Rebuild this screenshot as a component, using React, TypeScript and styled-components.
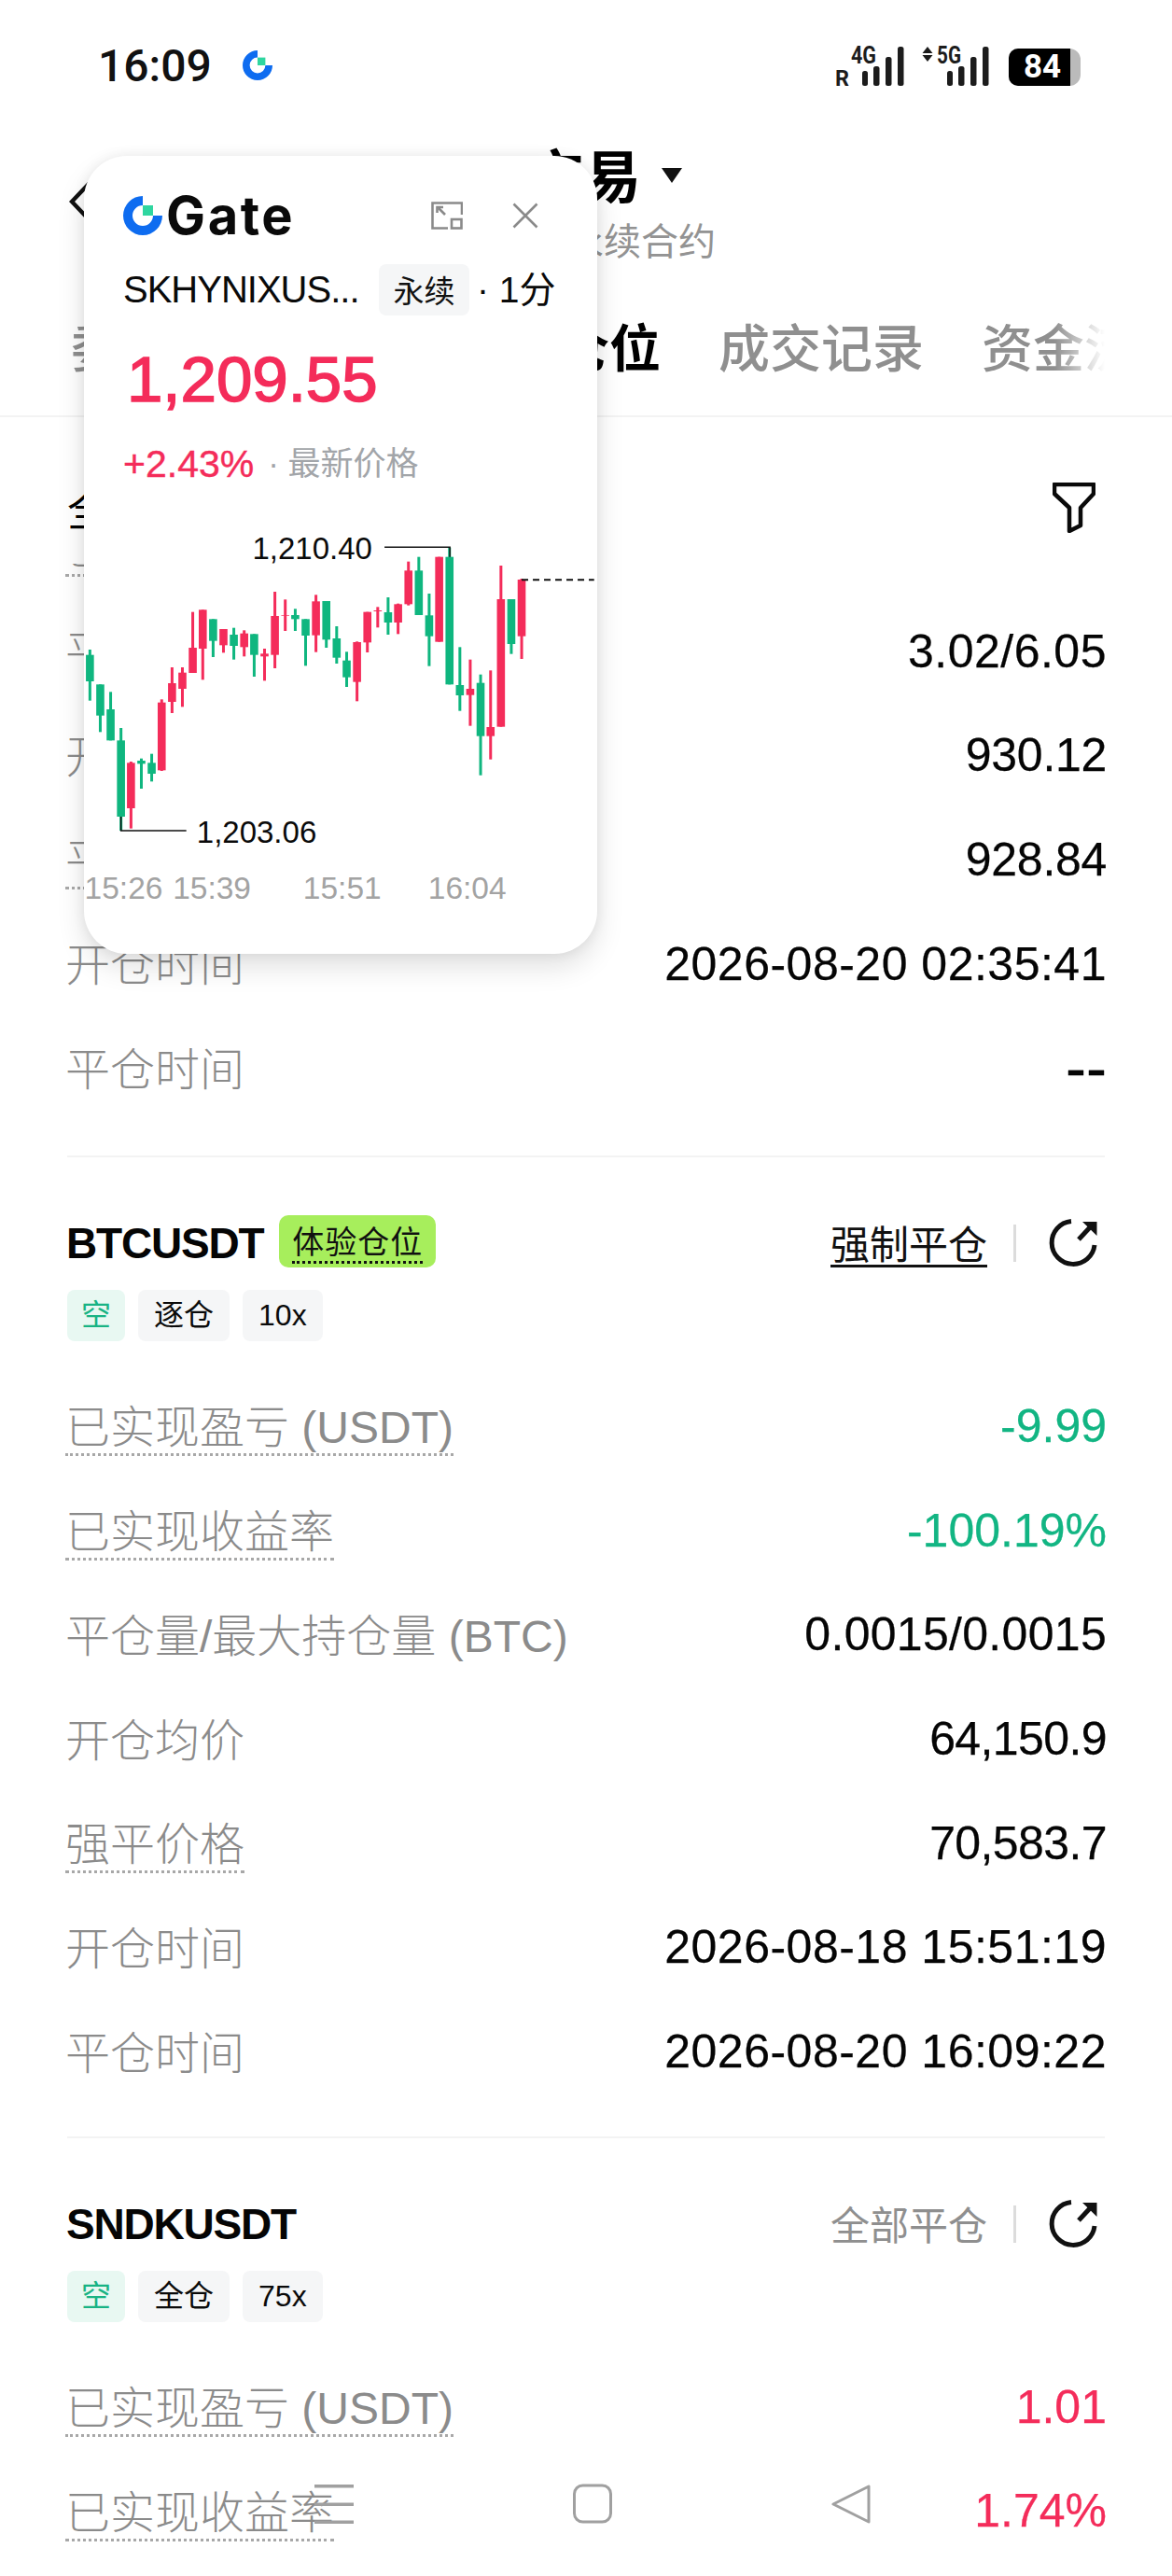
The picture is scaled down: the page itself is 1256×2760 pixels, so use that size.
import React from "react";
import styled, { createGlobalStyle } from "styled-components";

const GlobalStyle = createGlobalStyle`
  html, body { margin: 0; padding: 0; background: #fff; }
  body { font-family: "Liberation Sans", "Noto Sans CJK SC", sans-serif; }
`;

const RED = "#f42c5a";
const GREEN = "#0fb67f";

const Page = styled.div`
  position: relative;
  width: 1256px;
  height: 2760px;
  overflow: hidden;
  background: #fff;
  display: flex;
  flex-direction: column;
  color: #0a0a0a;
`;

const StatusBar = styled.div`
  height: 140px;
  flex: none;
  display: flex;
  align-items: center;
  padding: 0 98px 0 105px;
`;
const Time = styled.span`
  font: 500 48px/1 Roboto, sans-serif;
  color: #111;
  margin-top: 2px;
`;
const StatusMark = styled.svg`
  width: 32px;
  height: 32px;
  margin-left: 33px;
`;
const Signals = styled.svg`
  width: 166px;
  height: 50px;
  margin-left: auto;
  margin-top: 2px;
`;
const Battery = styled.div`
  margin-left: 20px;
  width: 77px;
  height: 40px;
  border-radius: 10px 12px 12px 10px;
  margin-top: 4px;
  background: #bbb;
  overflow: hidden;
  display: flex;
`;
const BatteryFill = styled.div`
  width: 66px;
  height: 100%;
  background: #000;
  color: #fff;
  font: 700 35px/40px Roboto, sans-serif;
  text-align: center;
  padding-left: 6px;
  box-sizing: border-box;
`;

const Header = styled.div`
  height: 158px;
  flex: none;
  box-sizing: border-box;
  padding: 16px 489px 0 74px;
  display: flex;
  justify-content: space-between;
`;
const BackIcon = styled.svg`
  width: 26px;
  height: 48px;
  margin-top: 36px;
`;
const HeaderCenter = styled.div`
  display: flex;
  flex-direction: column;
  align-items: flex-end;
`;
const TitleRow = styled.div`
  display: flex;
  align-items: center;
  margin-right: 36px;
  font: 700 61px/60px "Noto Sans CJK SC", sans-serif;
  color: #000;
`;
const Caret = styled.svg`
  width: 22px;
  height: 16px;
  margin-left: 22px;
  margin-top: 4px;
`;
const Subtitle = styled.div`
  margin-top: 22px;
  font: 400 40px/42px "Liberation Sans", "Noto Sans CJK SC", sans-serif;
  color: #939393;
`;

const TabsBar = styled.div`
  height: 149px;
  flex: none;
  box-sizing: border-box;
  border-bottom: 2px solid #f3f3f3;
`;
const TabsTrack = styled.div`
  width: 1184px;
  height: 147px;
  box-sizing: border-box;
  padding: 0 0 6px 76px;
  display: flex;
  align-items: center;
  gap: 62px;
  overflow: hidden;
  white-space: nowrap;
  -webkit-mask-image: linear-gradient(to right, #000 1130px, transparent 1184px);
  mask-image: linear-gradient(to right, #000 1130px, transparent 1184px);
`;
const Tab = styled.span<{ $active?: boolean; $minWidth?: number }>`
  flex: none;
  min-width: ${(p) => p.$minWidth ?? 0}px;
  font: ${(p) => (p.$active ? 700 : 500)} 55px/64px "Noto Sans CJK SC", sans-serif;
  color: ${(p) => (p.$active ? "#000" : "#8f8f8f")};
`;

const FilterRow = styled.div`
  height: 157px;
  flex: none;
  box-sizing: border-box;
  padding: 68px 82px 0 72px;
  display: flex;
  justify-content: space-between;
  align-items: flex-start;
`;
const FilterLabel = styled.span`
  font: 400 46px/56px "Noto Sans CJK SC", sans-serif;
  color: #000;
`;
const FilterIcon = styled.svg`
  width: 46px;
  height: 54px;
  margin-top: 2px;
`;

const ScrollArea = styled.div`
  flex: 1;
  min-height: 0;
  overflow: hidden;
`;
const ScrollInner = styled.div`
  margin-top: -74px;
  padding: 0 72px;
`;
const Section = styled.section<{ $first?: boolean }>`
  padding-top: ${(p) => (p.$first ? 0 : 59)}px;
  padding-bottom: ${(p) => (p.$first ? 38 : 35)}px;
  border-bottom: 2px solid #f3f3f3;
  &:last-child { border-bottom: 0; }
`;
const TitleLine = styled.div`
  height: 66px;
  display: flex;
  align-items: center;
`;
const Symbol = styled.span`
  font: 700 46px/66px "Liberation Sans", sans-serif;
  letter-spacing: -1.2px;
  margin-left: -1px;
  color: #050505;
`;
const TrialBadge = styled.span`
  margin-left: 17px;
  width: 168px;
  height: 56px;
  margin-top: -4px;
  box-sizing: border-box;
  padding-top: 5px;
  border-radius: 10px;
  background: #a7ee5c;
  display: flex;
  justify-content: center;
`;
const TrialText = styled.span`
  font: 400 34px/43px "Noto Sans CJK SC", sans-serif;
  letter-spacing: 1px;
  height: 44px;
  color: #111;
  border-bottom: 3px dotted #111;
`;
const Actions = styled.div`
  margin-left: auto;
  display: flex;
  align-items: center;
`;
const ActionLink = styled.span<{ $underlined?: boolean }>`
  font: 400 42px/50px "Noto Sans CJK SC", sans-serif;
  height: 52px;
  box-sizing: border-box;
  color: ${(p) => (p.$underlined ? "#111" : "#8f8f8f")};
  border-bottom: 3px solid ${(p) => (p.$underlined ? "#111" : "transparent")};
`;
const ActionDivider = styled.span`
  width: 3px;
  height: 40px;
  margin: 0 34px 0 28px;
  background: #dcdcdc;
`;
const ShareIcon = styled.svg`
  width: 56px;
  height: 56px;
  margin-right: 5px;
`;
const TagRow = styled.div`
  margin-top: 17px;
  display: flex;
  gap: 14px;
`;
const Tag = styled.span<{ $tone?: "short" }>`
  height: 55px;
  box-sizing: border-box;
  padding: 0 ${(p) => (p.$tone ? 15 : 17)}px;
  border-radius: 8px;
  font: 400 32px/55px "Liberation Sans", "Noto Sans CJK SC", sans-serif;
  background: ${(p) => (p.$tone ? "#e8f8f2" : "#f5f6f7")};
  color: ${(p) => (p.$tone ? "#19b384" : "#0a0a0a")};
`;
const Rows = styled.div<{ $first?: boolean }>`
  margin-top: ${(p) => (p.$first ? 0 : 35)}px;
`;
const Row = styled.div`
  height: 111.7px;
  display: flex;
  align-items: center;
  justify-content: space-between;
`;
const Label = styled.span<{ $dotted?: boolean }>`
  margin: 7px 0 0 -2px;
  font: 300 48px/56px "Liberation Sans", "Noto Sans CJK SC", sans-serif;
  color: #8b8b8b;
  box-sizing: border-box;
  height: 58px;
  border-bottom: 3px dotted ${(p) => (p.$dotted ? "#a8a8a8" : "transparent")};
`;
const Value = styled.span<{ $tone?: "up" | "down"; $tracking?: number; $dash?: boolean }>`
  margin-right: -2px;
  font: 400 ${(p) => (p.$dash ? 66 : 50)}px/56px "Liberation Sans", sans-serif;
  letter-spacing: ${(p) => p.$tracking ?? 0}px;
  -webkit-text-stroke: 0.25px currentColor;
  color: ${(p) => (p.$tone === "up" ? RED : p.$tone === "down" ? "#12b583" : "#050505")};
`;

/* floating mini chart window */
const FloatCard = styled.div`
  position: absolute;
  left: 90px;
  top: 167px;
  width: 550px;
  height: 855px;
  box-sizing: border-box;
  padding: 43px 0 0 42px;
  border-radius: 46px;
  background: #fff;
  overflow: hidden;
  box-shadow: 0 14px 30px rgba(0, 0, 0, 0.12), 0 0 14px rgba(0, 0, 0, 0.07);
`;
const CardTop = styled.div`
  height: 42px;
  display: flex;
  align-items: center;
  padding-right: 63px;
`;
const LogoMark = styled.svg`
  width: 42px;
  height: 42px;
`;
const LogoWord = styled.span`
  margin-left: 4px;
  font: 700 56px/42px Inter, sans-serif;
  letter-spacing: 2.6px;
  color: #0a0a0a;
`;
const ExpandIcon = styled.svg`
  width: 34px;
  height: 30px;
  margin-left: auto;
`;
const CloseIcon = styled.svg`
  width: 28px;
  height: 28px;
  margin-left: 53px;
`;
const InfoRow = styled.div`
  margin-top: 31px;
  height: 55px;
  display: flex;
  align-items: center;
`;
const InfoName = styled.span`
  width: 254px;
  font: 400 40px/55px "Liberation Sans", sans-serif;
  letter-spacing: -1px;
  color: #0a0a0a;
  white-space: nowrap;
`;
const InfoTag = styled.span`
  margin-left: 20px;
  width: 97px;
  height: 55px;
  border-radius: 8px;
  background: #f5f6f7;
  text-align: center;
  font: 400 33px/55px "Noto Sans CJK SC", sans-serif;
  color: #111;
`;
const InfoPeriod = styled.span`
  margin-left: 8px;
  font: 400 39px/55px "Liberation Sans", "Noto Sans CJK SC", sans-serif;
  color: #0a0a0a;
  white-space: nowrap;
`;
const Price = styled.div`
  margin: 32px 0 0 4px;
  font: 400 69px/74px "Liberation Sans", sans-serif;
  -webkit-text-stroke: 1.6px ${RED};
  color: ${RED};
`;
const ChangeRow = styled.div`
  margin-top: 31px;
  height: 44px;
  display: flex;
  align-items: center;
`;
const ChangeValue = styled.span`
  font: 400 41px/44px "Liberation Sans", sans-serif;
  -webkit-text-stroke: 0.4px ${RED};
  color: ${RED};
`;
const ChangeNote = styled.span`
  margin-left: 15px;
  font: 400 35px/44px "Liberation Sans", "Noto Sans CJK SC", sans-serif;
  color: #a2a5a9;
`;
const ChartSvg = styled.svg`
  display: block;
  width: 550px;
  height: 470px;
  margin: 21px 0 0 -42px;
`;

/* system navigation drawn over the content */
const NavKeys = styled.div`
  position: absolute;
  left: 337px;
  top: 2661px;
  display: flex;
  gap: 235px;
`;
const NavIcon = styled.svg`
  width: 42px;
  height: 44px;
`;

type CandleData = [number, number, number, number, number, "r" | "g"];
const candles: CandleData[] = [
  [95, 468, 632, 485, 570, "g"], [124, 580, 733, 580, 680, "g"], [153, 604, 760, 660, 760, "g"],
  [182, 720, 1050, 760, 1005, "g"], [210, 828, 1043, 832, 978, "r"], [239, 818, 915, 825, 835, "g"],
  [268, 803, 892, 832, 867, "g"], [296, 628, 858, 638, 856, "r"], [325, 525, 672, 576, 636, "r"],
  [354, 525, 652, 542, 594, "r"], [383, 347, 543, 462, 543, "r"], [411, 340, 565, 340, 465, "r"],
  [440, 370, 492, 370, 440, "g"], [469, 402, 478, 402, 454, "r"], [498, 398, 500, 420, 456, "g"],
  [527, 406, 490, 416, 460, "r"], [555, 418, 555, 418, 485, "g"], [584, 465, 568, 481, 490, "r"],
  [613, 282, 528, 360, 485, "r"], [642, 307, 408, 357, 359, "r"], [670, 337, 408, 357, 370, "g"],
  [699, 370, 520, 370, 423, "g"], [728, 292, 476, 313, 422, "r"], [757, 312, 462, 312, 436, "g"],
  [786, 393, 513, 432, 494, "g"], [814, 475, 588, 503, 557, "g"], [843, 442, 634, 444, 572, "r"],
  [872, 347, 477, 347, 445, "r"], [901, 331, 397, 342, 345, "r"], [930, 300, 420, 348, 381, "g"],
  [958, 320, 418, 322, 381, "r"], [987, 185, 326, 214, 322, "r"], [1016, 170, 357, 214, 357, "g"],
  [1045, 288, 521, 358, 425, "g"], [1073, 170, 443, 170, 443, "r"], [1102, 140, 580, 170, 580, "g"],
  [1131, 460, 665, 582, 615, "g"], [1160, 500, 713, 594, 614, "r"], [1189, 548, 872, 575, 746, "g"],
  [1217, 535, 821, 717, 746, "r"], [1246, 198, 716, 306, 716, "r"], [1275, 306, 482, 306, 450, "g"],
  [1304, 240, 498, 243, 425, "r"],
];
const cx = (x: number) => x / 2.613 - 30;
const cy = (y: number) => y / 3;

const Chart = () => (
  <ChartSvg viewBox="0 0 550 470">
    {candles.map(([x, wt, wb, bt, bb, c], i) => {
      const color = c === "r" ? RED : GREEN;
      return (
        <g key={i} fill={color}>
          <rect x={cx(x) - 1.5} y={cy(wt)} width={3} height={cy(wb) - cy(wt)} />
          <rect x={cx(x) - 4.3} y={cy(bt)} width={8.6} height={cy(bb) - cy(bt)} />
        </g>
      );
    })}
    <path d={`M${cx(920)} ${cy(139)}H${cx(1103)}V${cy(170)}`} fill="none" stroke="#111" strokeWidth="1.5" />
    <path d={`M${cx(182)} ${cy(1005)}V${cy(1050)}H${cx(365)}`} fill="none" stroke="#111" strokeWidth="1.5" />
    <path d={`M${cx(1304)} ${cy(244)}H${cx(1507)}`} fill="none" stroke="#111" strokeWidth="2" strokeDasharray="7 5" />
    <g fontFamily="'Liberation Sans', sans-serif" fontSize="33" fill="#0a0a0a">
      <text x={cx(550)} y={cy(176)}>1,210.40</text>
      <text x={cx(394)} y={cy(1088)}>1,203.06</text>
    </g>
    <g fontFamily="'Liberation Sans', sans-serif" fontSize="33.5" fill="#a3a3a3">
      <text x={cx(80)} y={cy(1270)}>15:26</text>
      <text x={cx(327)} y={cy(1270)}>15:39</text>
      <text x={cx(692)} y={cy(1270)}>15:51</text>
      <text x={cx(1042)} y={cy(1270)}>16:04</text>
    </g>
  </ChartSvg>
);

const GateMark = () => (
  <>
    <path d="M21 0A21 21 0 1 0 42 21H32A11 11 0 1 1 21 10Z" fill="#0e6cf0" />
    <rect x="21" y="10" width="11" height="11" fill="#2fd6a0" />
  </>
);

const ShareGlyph = () => (
  <ShareIcon viewBox="0 0 56 56" fill="none">
    <path d="M25 4.5A23 23 0 1 0 50 30" stroke="#111" strokeWidth="5" />
    <path d="M33 24L46 10" stroke="#111" strokeWidth="5" />
    <path d="M37 5H52.5V20Z" fill="#111" />
  </ShareIcon>
);

type RowData = {
  label: string;
  value: string;
  dotted?: boolean;
  tone?: "up" | "down";
  tracking?: number;
  dash?: boolean;
};

const Rowset = ({ rows, first }: { rows: RowData[]; first?: boolean }) => (
  <Rows $first={first}>
    {rows.map((r) => (
      <Row key={r.label}>
        <Label $dotted={r.dotted}>{r.label}</Label>
        <Value $tone={r.tone} $tracking={r.tracking} $dash={r.dash}>{r.value}</Value>
      </Row>
    ))}
  </Rows>
);

const firstRows: RowData[] = [
  { label: "已实现收益率", value: "1.14%", dotted: true, tone: "up" },
  { label: "平仓量/最大持仓量 (张)", value: "3.02/6.05", tracking: 0.5 },
  { label: "开仓均价", value: "930.12", tracking: -0.3 },
  { label: "平仓均价", value: "928.84", dotted: true, tracking: -0.3 },
  { label: "开仓时间", value: "2026-08-20 02:35:41", tracking: 0.5 },
  { label: "平仓时间", value: "--", dash: true },
];
const btcRows: RowData[] = [
  { label: "已实现盈亏 (USDT)", value: "-9.99", dotted: true, tone: "down" },
  { label: "已实现收益率", value: "-100.19%", dotted: true, tone: "down" },
  { label: "平仓量/最大持仓量 (BTC)", value: "0.0015/0.0015", tracking: 0.3 },
  { label: "开仓均价", value: "64,150.9", tracking: -0.6 },
  { label: "强平价格", value: "70,583.7", dotted: true, tracking: -0.6 },
  { label: "开仓时间", value: "2026-08-18 15:51:19", tracking: 0.5 },
  { label: "平仓时间", value: "2026-08-20 16:09:22", tracking: 0.5 },
];
const sndkRows: RowData[] = [
  { label: "已实现盈亏 (USDT)", value: "1.01", dotted: true, tone: "up" },
  { label: "已实现收益率", value: "1.74%", dotted: true, tone: "up" },
];

export default function App() {
  return (
    <Page>
      <GlobalStyle />
      <StatusBar>
        <Time>16:09</Time>
        <StatusMark viewBox="0 0 42 42"><GateMark /></StatusMark>
        <Signals viewBox="0 0 166 50" fill="#1c1c1c">
          <text x="0" y="46" fontFamily="Roboto, sans-serif" fontWeight="700" fontSize="24" textLength="15" lengthAdjust="spacingAndGlyphs">R</text>
          <text x="17" y="22" fontFamily="Roboto, sans-serif" fontWeight="700" fontSize="25" textLength="27" lengthAdjust="spacingAndGlyphs">4G</text>
          <rect x="29" y="30" width="6" height="16" rx="2.5" />
          <rect x="41" y="25" width="6.5" height="21" rx="2.5" />
          <rect x="54" y="15" width="6.5" height="31" rx="2.5" />
          <rect x="67" y="4" width="6.5" height="42" rx="2.5" />
          <path d="M99 4L104.5 11H93.5Z M93.5 13H104.5L99 20Z" />
          <text x="109" y="22" fontFamily="Roboto, sans-serif" fontWeight="700" fontSize="25" textLength="26" lengthAdjust="spacingAndGlyphs">5G</text>
          <rect x="120" y="30" width="6" height="16" rx="2.5" />
          <rect x="132" y="25" width="6.5" height="21" rx="2.5" />
          <rect x="145" y="15" width="6.5" height="31" rx="2.5" />
          <rect x="158" y="4" width="6.5" height="42" rx="2.5" />
        </Signals>
        <Battery><BatteryFill>84</BatteryFill></Battery>
      </StatusBar>

      <Header>
        <BackIcon viewBox="0 0 26 48" fill="none">
          <path d="M22 4L3 24L22 44" stroke="#111" strokeWidth="4.5" />
        </BackIcon>
        <HeaderCenter>
          <TitleRow>
            交易
            <Caret viewBox="0 0 22 16"><path d="M0 0H22L11 16Z" fill="#111" /></Caret>
          </TitleRow>
          <Subtitle>USDT永续合约</Subtitle>
        </HeaderCenter>
      </Header>

      <TabsBar>
        <TabsTrack>
          <Tab $minWidth={123}>委托</Tab>
          <Tab>条件单</Tab>
          <Tab $active>历史仓位</Tab>
          <Tab>成交记录</Tab>
          <Tab>资金流水</Tab>
        </TabsTrack>
      </TabsBar>

      <FilterRow>
        <FilterLabel>全部</FilterLabel>
        <FilterIcon viewBox="0 0 46 54" fill="none">
          <path d="M2 2H44V12L30 27V46L18 52V27L2 12Z" stroke="#0a0a0a" strokeWidth="4.5" strokeLinejoin="round" />
        </FilterIcon>
      </FilterRow>

      <ScrollArea>
        <ScrollInner>
          <Section $first>
            <Rowset rows={firstRows} first />
          </Section>
          <Section>
            <TitleLine>
              <Symbol>BTCUSDT</Symbol>
              <TrialBadge><TrialText>体验仓位</TrialText></TrialBadge>
              <Actions>
                <ActionLink $underlined>强制平仓</ActionLink>
                <ActionDivider />
                <ShareGlyph />
              </Actions>
            </TitleLine>
            <TagRow>
              <Tag $tone="short">空</Tag>
              <Tag>逐仓</Tag>
              <Tag>10x</Tag>
            </TagRow>
            <Rowset rows={btcRows} />
          </Section>
          <Section>
            <TitleLine>
              <Symbol>SNDKUSDT</Symbol>
              <Actions>
                <ActionLink>全部平仓</ActionLink>
                <ActionDivider />
                <ShareGlyph />
              </Actions>
            </TitleLine>
            <TagRow>
              <Tag $tone="short">空</Tag>
              <Tag>全仓</Tag>
              <Tag>75x</Tag>
            </TagRow>
            <Rowset rows={sndkRows} />
          </Section>
        </ScrollInner>
      </ScrollArea>

      <FloatCard>
        <CardTop>
          <LogoMark viewBox="0 0 42 42"><GateMark /></LogoMark>
          <LogoWord>Gate</LogoWord>
          <ExpandIcon viewBox="0 0 34 30" fill="none" stroke="#8a8a8a" strokeWidth="2.6">
            <path d="M33 14V1.5H1.5V28.5H18" />
            <rect x="22" y="19" width="10.5" height="9.5" />
            <path d="M8 7L15 14" />
            <path d="M6.5 12V6H13" />
          </ExpandIcon>
          <CloseIcon viewBox="0 0 28 28" fill="none" stroke="#8a8a8a" strokeWidth="2.6">
            <path d="M1.5 1.5L26.5 26.5M26.5 1.5L1.5 26.5" />
          </CloseIcon>
        </CardTop>
        <InfoRow>
          <InfoName>SKHYNIXUS...</InfoName>
          <InfoTag>永续</InfoTag>
          <InfoPeriod>· 1分</InfoPeriod>
        </InfoRow>
        <Price>1,209.55</Price>
        <ChangeRow>
          <ChangeValue>+2.43%</ChangeValue>
          <ChangeNote>· 最新价格</ChangeNote>
        </ChangeRow>
        <Chart />
      </FloatCard>

      <NavKeys>
        <NavIcon viewBox="0 0 42 44" fill="#a0a0a0">
          <rect x="0" y="1" width="42" height="3.5" />
          <rect x="0" y="20.5" width="42" height="3.5" />
          <rect x="0" y="39.5" width="42" height="3.5" />
        </NavIcon>
        <NavIcon viewBox="0 0 42 44" fill="none" stroke="#a0a0a0" strokeWidth="3">
          <rect x="1.5" y="2" width="39" height="39" rx="9" />
        </NavIcon>
        <NavIcon viewBox="0 0 42 44" fill="none" stroke="#a0a0a0" strokeWidth="3" strokeLinejoin="round">
          <path d="M40 3V41L2 22Z" />
        </NavIcon>
      </NavKeys>
    </Page>
  );
}
